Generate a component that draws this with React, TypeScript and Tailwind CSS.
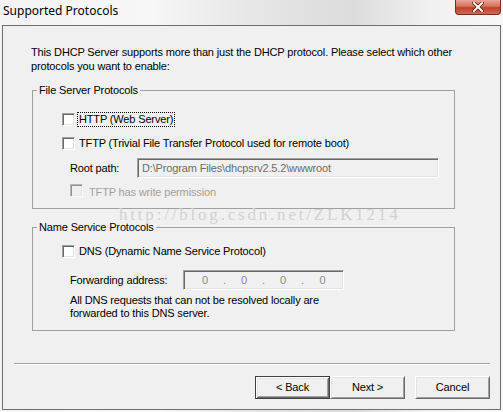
import React from "react";

function CheckBox({ disabled = false }: { disabled?: boolean }) {
  return (
    <span
      className={`inline-block h-[13px] w-[13px] shrink-0 border border-t-[#a0a0a0] border-l-[#a0a0a0] border-b-white border-r-white shadow-[inset_1px_1px_0_#696969,inset_-1px_-1px_0_#e3e3e3] ${
        disabled ? "bg-[#f0f0f0]" : "bg-white"
      }`}
    />
  );
}

function Sunken({ className, children }: { className: string; children?: React.ReactNode }) {
  return (
    <div
      className={`flex items-center border border-t-[#a0a0a0] border-l-[#a0a0a0] border-b-white border-r-white bg-[#f0f0f0] shadow-[inset_1px_1px_0_#696969,inset_-1px_-1px_0_#e3e3e3] ${className}`}
    >
      {children}
    </div>
  );
}

function WinButton({ label, isDefault = false }: { label: string; isDefault?: boolean }) {
  return (
    <div
      className={`flex h-[23px] w-[75px] items-center justify-center bg-[#f0f0f0] ${
        isDefault
          ? "border border-[#404040] shadow-[inset_1px_1px_0_#fff,inset_-1px_-1px_0_#696969,inset_2px_2px_0_#e3e3e3,inset_-2px_-2px_0_#a0a0a0]"
          : "border border-t-white border-l-white border-b-[#696969] border-r-[#696969] shadow-[inset_1px_1px_0_#e3e3e3,inset_-1px_-1px_0_#a0a0a0]"
      }`}
    >
      {label}
    </div>
  );
}

function CloseButton() {
  return (
    <div className="flex h-[15px] w-[46px] items-center justify-center rounded-b-[4px] border border-t-0 border-[#7a2a20] bg-[linear-gradient(180deg,#e8a596_0%,#d7705c_45%,#c1402c_55%,#cf6a4f_100%)]">
      <svg width="12" height="10" viewBox="0 0 12 10">
        <path d="M2 1 L10 9 M10 1 L2 9" stroke="#5a1a12" strokeWidth="3.6" strokeLinecap="square" />
        <path d="M2 1 L10 9 M10 1 L2 9" stroke="#ffffff" strokeWidth="2" strokeLinecap="square" />
      </svg>
    </div>
  );
}

export default function App() {
  return (
    <div className="relative flex h-[412px] w-[503px] flex-col overflow-hidden bg-[linear-gradient(90deg,#f3f3f3_0%,#f7f7f7_30%,#e6e6e6_50%,#dcdcdc_70%,#f0f0f0_85%,#f7f7f7_100%)] font-['Liberation_Sans',Arial,sans-serif] text-[11px] tracking-[-0.15px] text-black">
      <div className="flex h-[25px] shrink-0 items-start justify-between">
        <div className="pl-[3px] pt-[2px] font-['Noto_Sans',sans-serif] text-[12px] leading-[18px] tracking-normal text-black">
          Supported Protocols
        </div>
        <div className="mr-[2px]">
          <CloseButton />
        </div>
      </div>

      <div className="mx-[2px] flex h-[385px] flex-col border border-[#6e6e6e] bg-[#f0f0f0]">
        <div className="whitespace-nowrap pl-[28px] pt-[19px] leading-[14px]">
          This DHCP Server supports more than just the DHCP protocol. Please select which other
          <br />
          protocols you want to enable:
        </div>

        <fieldset className="ml-[29px] mt-[10px] w-[423px] border border-[#a0a0a0] p-0">
          <legend className="ml-[4px] px-[2px] leading-[14px]">File Server Protocols</legend>
          <div className="flex flex-col pb-[8px] pt-[15px]">
            <div className="flex h-[15px] items-center pl-[29px]">
              <CheckBox />
              <span className="ml-[3px] px-[1px] leading-[13px] outline-1 outline-dotted outline-black">
                HTTP (Web Server)
              </span>
            </div>
            <div className="mt-[9px] flex h-[15px] items-center pl-[29px]">
              <CheckBox />
              <span className="ml-[4px]">TFTP (Trivial File Transfer Protocol used for remote boot)</span>
            </div>
            <div className="mt-[7px] flex h-[20px] items-center pl-[37px]">
              <span className="w-[67px]">Root path:</span>
              <Sunken className="h-[20px] w-[302px] pl-[4px] text-[#6d6d6d]">
                D:\Program Files\dhcpsrv2.5.2\wwwroot
              </Sunken>
            </div>
            <div className="mt-[7px] flex h-[15px] items-center pl-[37px] text-[#a0a0a0]">
              <span className="opacity-70">
                <CheckBox disabled />
              </span>
              <span className="ml-[6px]">TFTP has write permission</span>
            </div>
          </div>
        </fieldset>

        <fieldset className="ml-[29px] mt-[11px] w-[423px] border border-[#a0a0a0] p-0">
          <legend className="ml-[4px] px-[2px] leading-[14px]">Name Service Protocols</legend>
          <div className="flex flex-col pb-[10px] pt-[10px]">
            <div className="flex h-[15px] items-center pl-[29px]">
              <CheckBox />
              <span className="ml-[4px]">DNS (Dynamic Name Service Protocol)</span>
            </div>
            <div className="mt-[11px] flex h-[20px] items-center pl-[37px]">
              <span className="w-[113px]">Forwarding address:</span>
              <Sunken className="h-[20px] w-[161px] text-[#8a8a8a]">
                <div className="grid w-full grid-cols-4 pl-[3px]">
                  {["0", "0", "0", "0"].map((v, i) => (
                    <div key={i} className="flex items-center">
                      <span className="w-[37px] text-center">{v}</span>
                      {i < 3 ? <span>.</span> : null}
                    </div>
                  ))}
                </div>
              </Sunken>
            </div>
            <div className="mt-[4px] pl-[37px] leading-[13px]">
              All DNS requests that can not be resolved locally are
              <br />
              forwarded to this DNS server.
            </div>
          </div>
        </fieldset>

        <div className="ml-[11px] mt-[32px] h-[2px] w-[476px] border-b border-t border-b-white border-t-[#a0a0a0]" />

        <div className="mt-[11px] flex justify-end pr-[10px]">
          <WinButton label="< Back" isDefault />
          <WinButton label="Next >" />
          <div className="w-[10px]" />
          <WinButton label="Cancel" />
        </div>
      </div>

      <div className="pointer-events-none absolute left-[119px] top-[208px] whitespace-nowrap font-['Liberation_Serif',serif] text-[17px] leading-[14px] tracking-[2.8px] text-[#d2d2d2]">
        http://blog.csdn.net/ZLK1214
      </div>
    </div>
  );
}
